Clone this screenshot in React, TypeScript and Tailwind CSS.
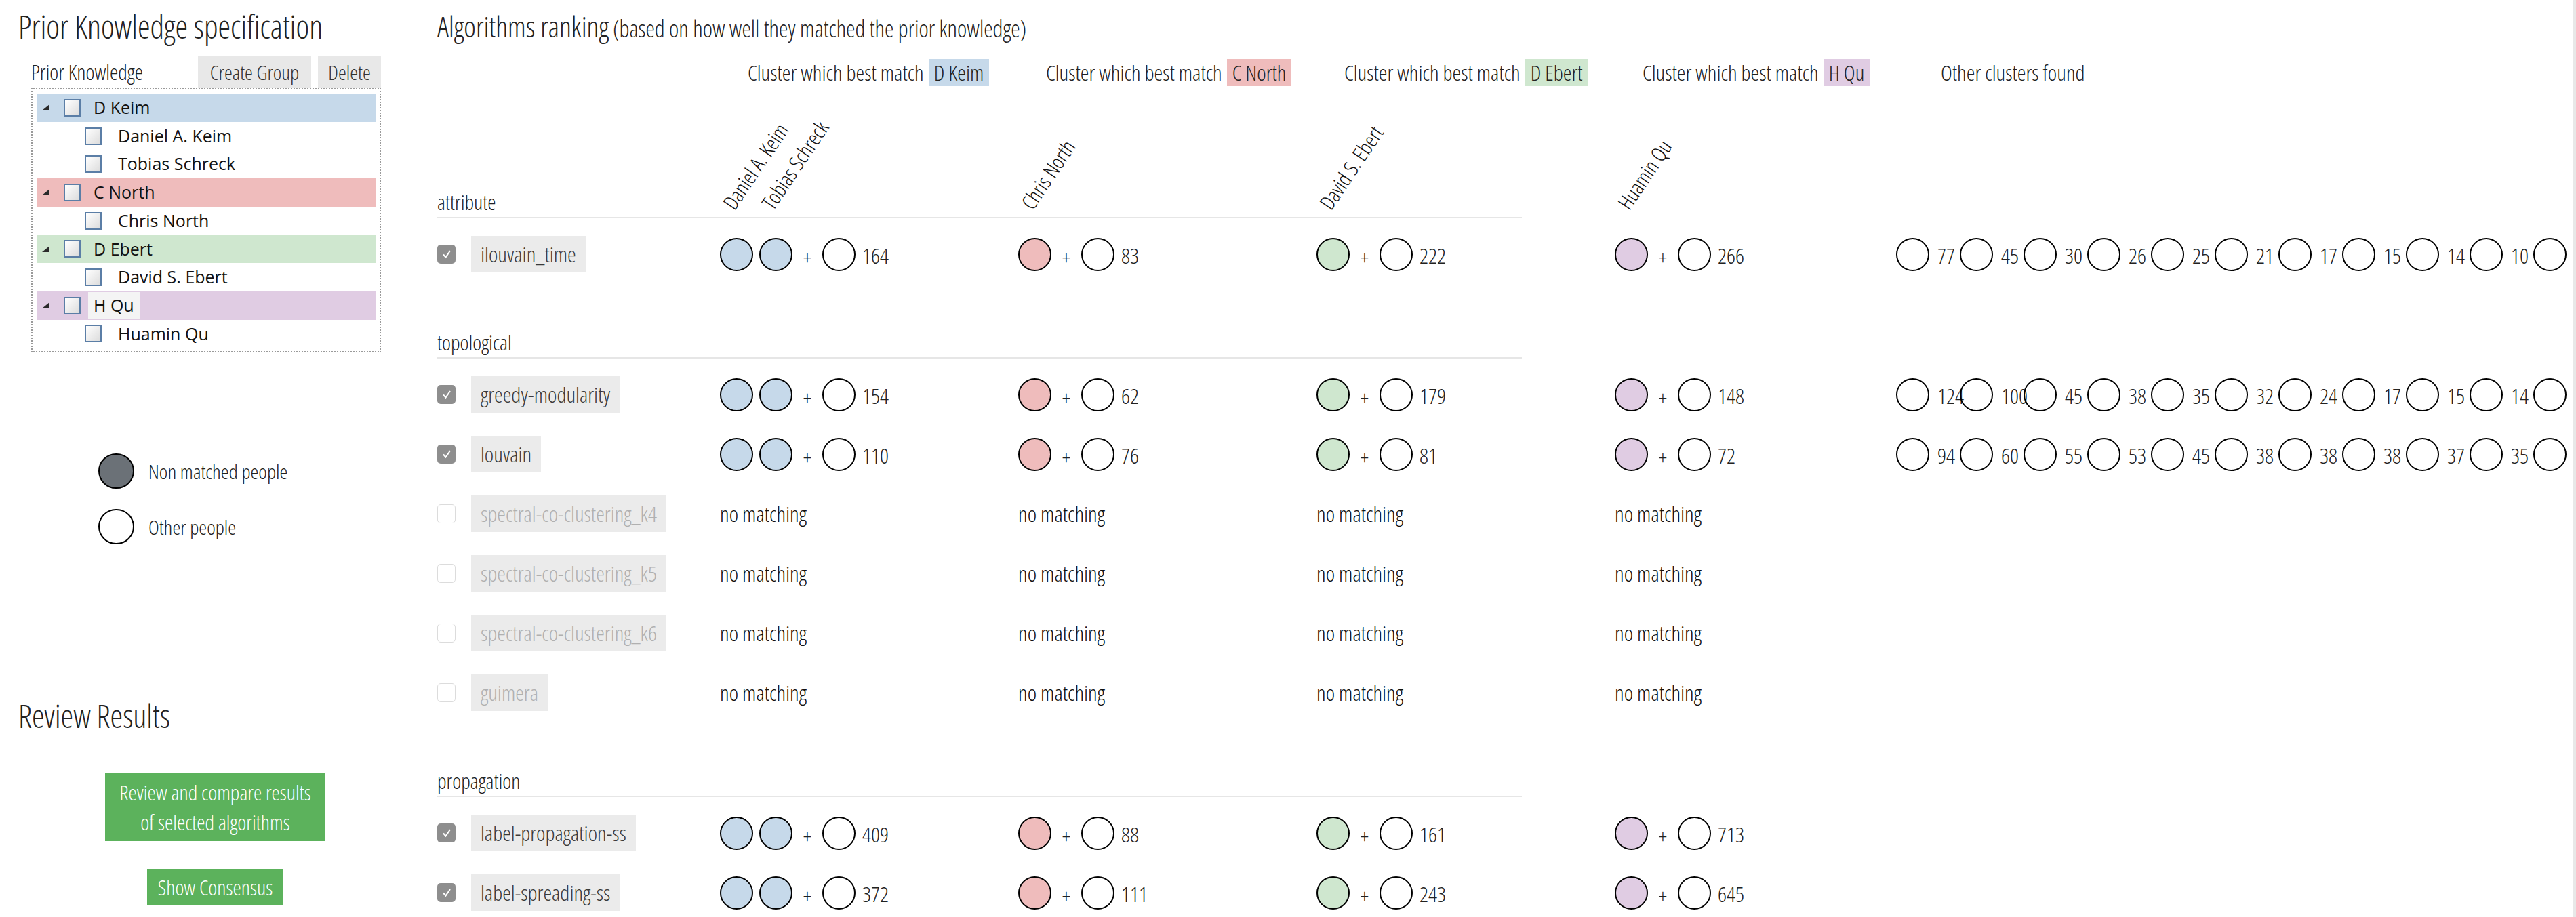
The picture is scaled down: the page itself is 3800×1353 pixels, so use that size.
import React from 'react';

const cond = "font-['Open_Sans',sans-serif] [font-stretch:75%] font-light";

type Match = { color: string; n: number; count: number } | null;
type Algo = { name: string; on: boolean; cells: Match[]; others?: number[] };

const BLUE = 'bg-[#c6d9ea]';
const RED = 'bg-[#efbcbc]';
const GREEN = 'bg-[#cfe7cf]';
const PURPLE = 'bg-[#e0cce3]';

const m = (a: number, b: number, c: number, d: number): Match[] => [
    { color: BLUE, n: 2, count: a },
    { color: RED, n: 1, count: b },
    { color: GREEN, n: 1, count: c },
    { color: PURPLE, n: 1, count: d },
];
const none: Match[] = [null, null, null, null];

const sections: { title: string; algos: Algo[] }[] = [
    {
        title: 'attribute',
        algos: [{ name: 'ilouvain_time', on: true, cells: m(164, 83, 222, 266), others: [77, 45, 30, 26, 25, 21, 17, 15, 14, 10, 9] }],
    },
    {
        title: 'topological',
        algos: [
            { name: 'greedy-modularity', on: true, cells: m(154, 62, 179, 148), others: [124, 100, 45, 38, 35, 32, 24, 17, 15, 14, 12] },
            { name: 'louvain', on: true, cells: m(110, 76, 81, 72), others: [94, 60, 55, 53, 45, 38, 38, 38, 37, 35, 33] },
            { name: 'spectral-co-clustering_k4', on: false, cells: none },
            { name: 'spectral-co-clustering_k5', on: false, cells: none },
            { name: 'spectral-co-clustering_k6', on: false, cells: none },
            { name: 'guimera', on: false, cells: none },
        ],
    },
    {
        title: 'propagation',
        algos: [
            { name: 'label-propagation-ss', on: true, cells: m(409, 88, 161, 713) },
            { name: 'label-spreading-ss', on: true, cells: m(372, 111, 243, 645) },
        ],
    },
];

const tree = [
    { label: 'D Keim', color: BLUE, kids: ['Daniel A. Keim', 'Tobias Schreck'] },
    { label: 'C North', color: RED, kids: ['Chris North'] },
    { label: 'D Ebert', color: GREEN, kids: ['David S. Ebert'] },
    { label: 'H Qu', color: PURPLE, kids: ['Huamin Qu'], focus: true },
];

const colWidths = ['w-[440px]', 'w-[440px]', 'w-[440px]', 'w-[415px]'];

function Circle({ color = 'bg-white' }: { color?: string }) {
    return <div className={`w-[49px] h-[49px] flex-none rounded-full border-2 border-black ${color}`} />;
}

function TreeBox() {
    return <div className="w-[25px] h-[26px] flex-none border-2 border-[#5b7ea6] bg-gradient-to-br from-white to-[#dcdcdc]" />;
}

function PriorTree() {
    return (
        <div className="ml-[19px] w-[516px] h-[390px] border-2 border-dotted border-[#9a9a9a] p-[6px] font-['Open_Sans',sans-serif] text-[25px] text-[#111]">
            {tree.map((g) => (
                <div key={g.label}>
                    <div className={`h-[41.7px] flex items-center ${g.color}`}>
                        <svg width="11" height="9" viewBox="0 0 11 9" className="ml-[8px] flex-none">
                            <polygon points="11,0 11,9 0,9" fill="#2a2a2a" />
                        </svg>
                        <div className="ml-[21px]"><TreeBox /></div>
                        <span className={`ml-[11px] h-[39px] px-[8px] flex items-center ${g.focus ? 'bg-[#f4f4f4]' : ''}`}>{g.label}</span>
                    </div>
                    {g.kids.map((k) => (
                        <div key={k} className="h-[41.7px] flex items-center pl-[71px]">
                            <TreeBox />
                            <span className="ml-[24px]">{k}</span>
                        </div>
                    ))}
                </div>
            ))}
        </div>
    );
}

function LeftPanel() {
    return (
        <div className="w-[645px] flex-none pl-[27px] flex flex-col text-[#222]">
            <h1 className={`${cond} text-[47px] leading-[64px] pt-[7px]`}>Prior Knowledge specification</h1>
            <div className="mt-[12px] ml-[19px] w-[516px] h-[47px] flex items-end">
                <span className={`${cond} text-[31px] leading-[40px] pb-[4px]`}>Prior Knowledge</span>
                <button className={`${cond} ml-auto w-[167px] h-[47px] bg-[#e8e8e8] text-[30px] text-[#333]`}>Create Group</button>
                <button className={`${cond} ml-[10px] w-[93px] h-[47px] bg-[#e8e8e8] text-[30px] text-[#333]`}>Delete</button>
            </div>
            <PriorTree />
            <div className="mt-[149px] ml-[118px] flex flex-col gap-[30px]">
                <div className="flex items-center h-[52px]">
                    <div className="w-[53px] h-[52px] rounded-full border-2 border-black bg-[#6b7177]" />
                    <span className={`${cond} ml-[21px] text-[30px]`}>Non matched people</span>
                </div>
                <div className="flex items-center h-[52px]">
                    <div className="w-[53px] h-[52px] rounded-full border-2 border-black bg-white" />
                    <span className={`${cond} ml-[21px] text-[30px]`}>Other people</span>
                </div>
            </div>
            <h1 className={`${cond} mt-[221px] text-[47px] leading-[64px]`}>Review Results</h1>
            <div className="w-[581px] flex flex-col items-center">
                <button className={`${cond} mt-[52px] w-[325px] h-[101px] bg-[#5cb25c] text-white text-[31px] leading-[44px]`}>
                    Review and compare results<br />of selected algorithms
                </button>
                <button className={`${cond} mt-[41px] w-[201px] h-[54px] bg-[#5cb25c] text-white text-[31px]`}>Show Consensus</button>
            </div>
        </div>
    );
}

function CheckBox({ on }: { on: boolean }) {
    if (!on) return <div className="w-[27px] h-[28px] flex-none rounded-[5px] border-[1.5px] border-[#dcdcdc] bg-white" />;
    return (
        <div className="w-[27px] h-[28px] flex-none rounded-[5px] bg-[#8e8e8e] flex items-center justify-center">
            <svg width="16" height="16" viewBox="0 0 16 16">
                <polyline points="3,8.5 6.5,12.5 13,3" fill="none" stroke="white" strokeWidth="2" />
            </svg>
        </div>
    );
}

function MatchCell({ c }: { c: Match }) {
    if (!c) return <span className={`${cond} text-[32px] text-[#111]`}>no matching</span>;
    return (
        <div className="flex items-center">
            <Circle color={c.color} />
            {c.n > 1 && <div className="ml-[9px]"><Circle color={c.color} /></div>}
            <span className={`${cond} w-[44px] text-center text-[30px] pt-[8px]`}>+</span>
            <Circle />
            <span className={`${cond} ml-[10px] text-[32px] pt-[4px]`}>{c.count}</span>
        </div>
    );
}

function AlgoRow({ a }: { a: Algo }) {
    return (
        <div className="h-[88px] flex items-center">
            <div className="w-[417px] flex-none flex items-center">
                <CheckBox on={a.on} />
                <span className={`${cond} ml-[23px] h-[54px] px-[14px] flex items-center bg-[#ebebeb] text-[32px] ${a.on ? 'text-[#3a3a3a]' : 'text-[#b0b0b0]'}`}>
                    {a.name}
                </span>
            </div>
            {a.cells.map((c, i) => (
                <div key={i} className={`${colWidths[i]} flex-none flex items-center`}>
                    <MatchCell c={c} />
                </div>
            ))}
            {a.others && (
                <div className="flex flex-none">
                    {a.others.map((n, i) => (
                        <div key={i} className="w-[94px] flex-none flex items-center">
                            <Circle color="bg-transparent" />
                            <span className={`${cond} ml-[12px] text-[32px] pt-[4px]`}>{n}</span>
                        </div>
                    ))}
                </div>
            )}
        </div>
    );
}

const heads = [
    { name: 'D Keim', color: BLUE },
    { name: 'C North', color: RED },
    { name: 'D Ebert', color: GREEN },
    { name: 'H Qu', color: PURPLE },
];

const rotated = [
    { text: 'Daniel A. Keim', left: 'left-[442px]' },
    { text: 'Tobias Schreck', left: 'left-[499px]' },
    { text: 'Chris North', left: 'left-[882px]' },
    { text: 'David S. Ebert', left: 'left-[1322px]' },
    { text: 'Huamin Qu', left: 'left-[1762px]' },
];

function RightPanel() {
    return (
        <div className="flex-1 min-w-0 overflow-hidden text-[#222]">
            <div className="h-[87px] pt-[7px] flex items-baseline whitespace-nowrap">
                <span className={`${cond} text-[42px] leading-[64px]`}>Algorithms ranking</span>
                <span className={`${cond} ml-[6px] text-[34px]`}>(based on how well they matched the prior knowledge)</span>
            </div>
            <div className="h-[40px] flex items-center whitespace-nowrap">
                <div className="w-[417px] flex-none" />
                {heads.map((h, i) => (
                    <div key={h.name} className={`${colWidths[i]} flex-none flex items-center pl-[41px]`}>
                        <span className={`${cond} text-[32px]`}>Cluster which best match</span>
                        <span className={`${cond} ml-[7px] h-[40px] px-[8px] flex items-center text-[32px] ${h.color}`}>{h.name}</span>
                    </div>
                ))}
                <span className={`${cond} pl-[66px] text-[32px]`}>Other clusters found</span>
            </div>
            {sections.map((s, si) => (
                <div key={s.title}>
                    <div className={`relative w-[1600px] ${si === 0 ? 'h-[195px]' : 'h-[110px]'} flex items-end pb-[2px] border-b-2 border-[#e6e6e6]`}>
                        <span className={`${cond} text-[31px] leading-[40px]`}>{s.title}</span>
                        {si === 0 &&
                            rotated.map((r) => (
                                <span
                                    key={r.text}
                                    className={`absolute bottom-[6px] ${r.left} origin-bottom-left -rotate-[56deg] whitespace-nowrap font-['Open_Sans',sans-serif] [font-stretch:87.5%] font-light text-[31px] leading-[32px] text-[#111]`}
                                >
                                    {r.text}
                                </span>
                            ))}
                    </div>
                    <div className="pt-[9px]">
                        {s.algos.map((a) => (
                            <AlgoRow key={a.name} a={a} />
                        ))}
                    </div>
                </div>
            ))}
        </div>
    );
}

export default function App() {
    return (
        <div className="relative w-[3800px] h-[1353px] overflow-hidden bg-white flex">
            <LeftPanel />
            <RightPanel />
            <div className="w-[4px] flex-none bg-[#e8e8e8]" />
        </div>
    );
}
